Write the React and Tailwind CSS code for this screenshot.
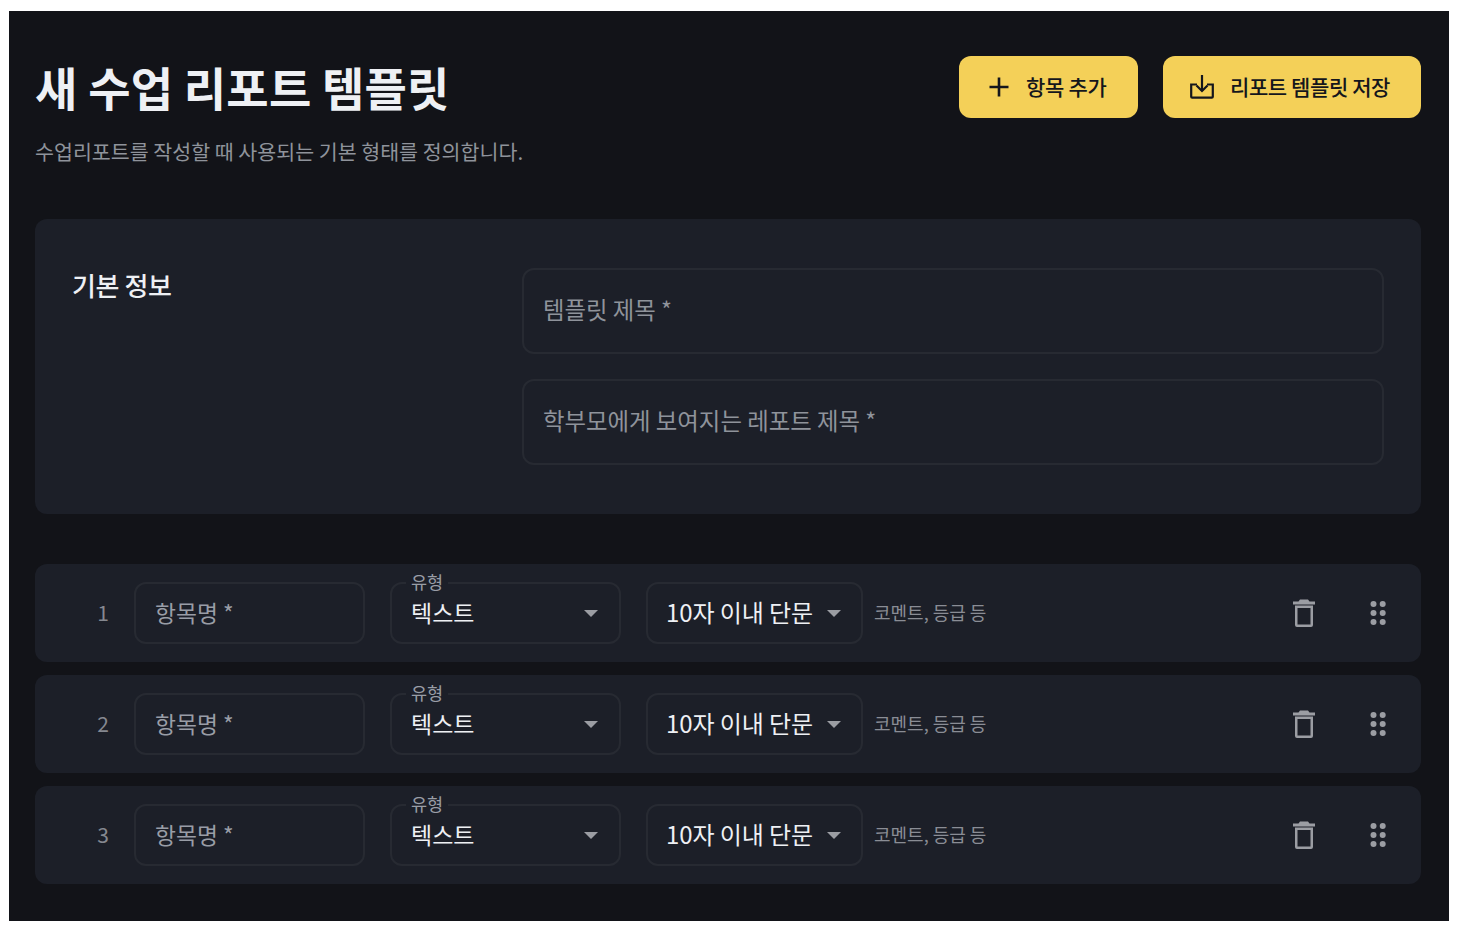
import React from "react";

const PlusIcon = () => (
  <svg className="w-[24px] h-[24px]" viewBox="0 0 24 24" fill="#14161c">
    <path d="M10.7 2.5h2.6v8.2h8.2v2.6h-8.2v8.2h-2.6v-8.2H2.5v-2.6h8.2z" />
  </svg>
);

const SaveIcon = () => (
  <svg className="w-[24px] h-[24px]" viewBox="0 0 24 24" fill="none" stroke="#14161c" strokeWidth="2.2">
    <path d="M12 0v16" />
    <path d="M6.5 10.5 12 16l5.5-5.5" />
    <path d="M7 9.5H1.2v12.2a1 1 0 0 0 1 1h19.6a1 1 0 0 0 1-1V9.5H17" />
  </svg>
);

const TrashIcon = () => (
  <svg className="w-[22px] h-[28px]" viewBox="0 0 22 28" fill="#9b9da3">
    <path d="M5.5 2.5 7 0.5h8l1.5 2H22v3H0v-3z" />
    <path fillRule="evenodd" d="M2 6.5h18V26a2 2 0 0 1-2 2H4a2 2 0 0 1-2-2zM4.5 9v16.5h13V9z" />
  </svg>
);

const DragIcon = () => (
  <svg className="w-[16px] h-[26px]" viewBox="0 0 16 26" fill="#9b9da3">
    <circle cx="3.5" cy="4" r="3" />
    <circle cx="12.7" cy="4" r="3" />
    <circle cx="3.5" cy="13" r="3" />
    <circle cx="12.7" cy="13" r="3" />
    <circle cx="3.5" cy="22" r="3" />
    <circle cx="12.7" cy="22" r="3" />
  </svg>
);

const Caret = () => (
  <span className="w-0 h-0 border-x-[7.5px] border-x-transparent border-t-[7px] border-t-[#9b9da3]" />
);

const Row = ({ n }) => (
  <div className="h-[98px] bg-[#1c1f28] rounded-[12px] flex items-center">
    <span className="w-[99px] pr-[25px] text-right text-[21px] text-[#858890]">{n}</span>
    <div className="w-[231px] h-[62px] border-2 border-[#272a32] rounded-[12px] flex items-center pl-[19px] text-[22.8px] text-[#999da6]">
      항목명 *
    </div>
    <div className="relative ml-[25px] w-[231px] h-[62px] border-2 border-[#272a32] rounded-[12px] flex items-center justify-between pl-[19px] pr-[21px]">
      <span className="absolute left-[14px] top-[-12px] bg-[#1c1f28] px-[5px] text-[17.5px] leading-[20px] text-[#999da6]">유형</span>
      <span className="pb-[2px] text-[23px] text-[#eef0f4]">텍스트</span>
      <Caret />
    </div>
    <div className="ml-[25px] w-[217px] h-[62px] border-2 border-[#272a32] rounded-[12px] flex items-center justify-between pl-[18px] pr-[20px]">
      <span className="pb-[2px] text-[24px] text-[#eef0f4] whitespace-nowrap tracking-[-0.1px]">10자 이내 단문</span>
      <Caret />
    </div>
    <span className="ml-[11px] pb-[2px] text-[18px] text-[#8a8d95]">코멘트, 등급 등</span>
    <div className="ml-auto flex items-center gap-[55px] pr-[35px]">
      <TrashIcon />
      <DragIcon />
    </div>
  </div>
);

const Field = ({ label }) => (
  <div className="h-[86px] border-2 border-[#272a32] rounded-[12px] flex items-center pl-[19px] pb-[3px] text-[23.4px] text-[#8f939b]">
    {label}
  </div>
);

export default function App() {
  return (
    <div className="w-[1460px] h-[932px] bg-white pt-[11px] pl-[9px] font-['Noto_Sans_CJK_KR','Noto_Sans',sans-serif]">
      <div className="w-[1440px] h-[910px] bg-[#121318] pt-[45px] pl-[26px] pr-[28px]">
        <div className="flex justify-between items-start">
          <div>
            <h1 className="text-[46px] leading-[68px] font-bold text-[#eef0f4] tracking-[0.2px] -mt-[4px]">새 수업 리포트 템플릿</h1>
            <p className="mt-[16px] mb-[2px] text-[20.6px] leading-[30px] text-[#8f939b]">수업리포트를 작성할 때 사용되는 기본 형태를 정의합니다.</p>
          </div>
          <div className="flex gap-[25px]">
            <button className="w-[179px] h-[62px] pl-[28px] bg-[#f4d058] rounded-[12px] flex items-center gap-[15px] pb-[1px] text-[21px] font-medium text-[#14161c] tracking-[-0.3px]">
              <PlusIcon />
              항목 추가
            </button>
            <button className="w-[258px] h-[62px] pl-[27px] bg-[#f4d058] rounded-[12px] flex items-center gap-[16px] pb-[1px] text-[21px] font-medium text-[#14161c] tracking-[-0.4px]">
              <SaveIcon />
              리포트 템플릿 저장
            </button>
          </div>
        </div>

        <div className="mt-[51px] h-[295px] bg-[#1c1f28] rounded-[12px] flex pl-[37px] pr-[37px] pt-[47px]">
          <h2 className="w-[450px] text-[26px] leading-[38px] font-medium text-[#eef0f4] tracking-[-0.4px]">기본 정보</h2>
          <div className="flex-1 flex flex-col gap-[25px] mt-[2px]">
            <Field label="템플릿 제목 *" />
            <Field label="학부모에게 보여지는 레포트 제목 *" />
          </div>
        </div>

        <div className="mt-[50px] flex flex-col gap-[13px]">
          {[1, 2, 3].map((n) => (
            <Row key={n} n={n} />
          ))}
        </div>
      </div>
    </div>
  );
}
